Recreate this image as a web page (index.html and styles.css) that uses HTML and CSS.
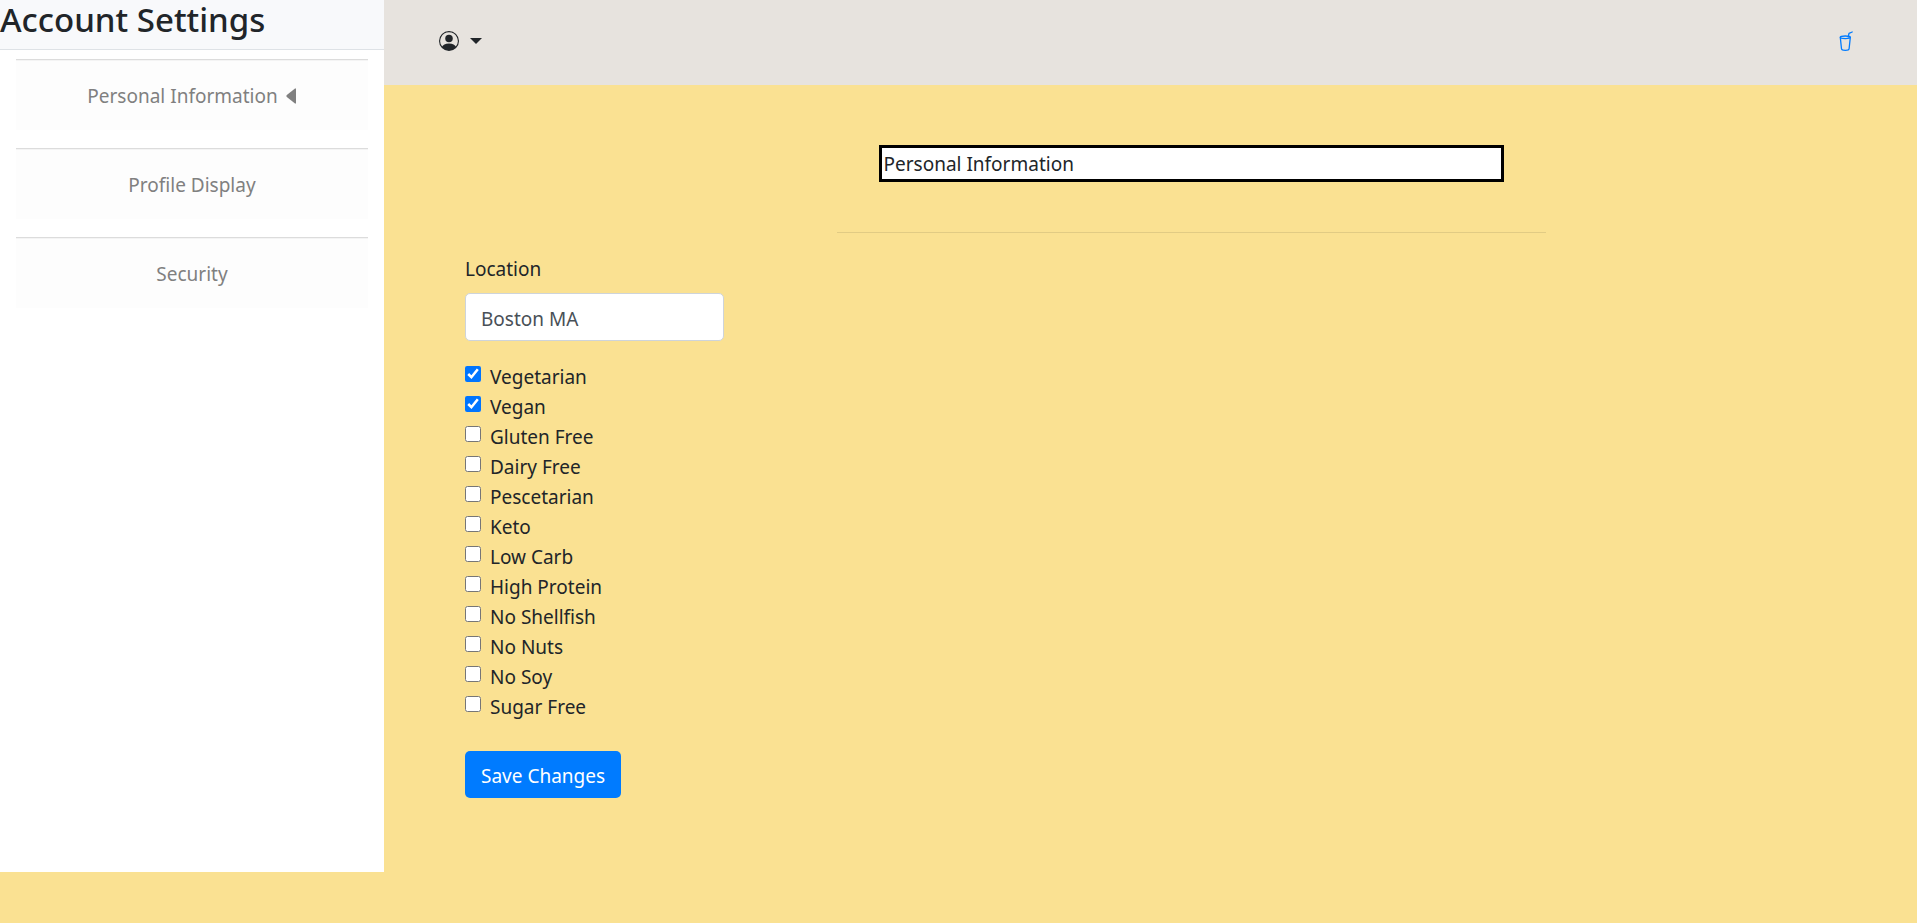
FILE: index.html
```html
<!DOCTYPE html>
<html lang="en">
<head>
<meta charset="utf-8">
<title>Account Settings</title>
<link rel="stylesheet" href="styles.css">
</head>
<body>
<div class="layout">
  <aside class="sidebar">
    <h1 class="sidebar-title">Account Settings</h1>
    <nav class="sidebar-nav">
      <a class="nav-item" href="#personal">Personal Information
        <svg class="nav-caret" viewBox="0 0 11 16" aria-hidden="true"><path d="M10 0.500v15H9L0.500 8.800V7.200L9 0.500z" fill="currentColor"/></svg></a>
      <a class="nav-item" href="#profile">Profile Display</a>
      <a class="nav-item" href="#security">Security</a>
    </nav>
  </aside>
  <div class="page">
    <header class="topbar">
      <button class="account-menu" type="button" aria-label="Account menu">
        <svg class="icon" viewBox="0 0 16 16" fill="currentColor" aria-hidden="true"><path d="M11 6a3 3 0 1 1-6 0 3 3 0 0 1 6 0z"/><path fill-rule="evenodd" d="M0 8a8 8 0 1 1 16 0A8 8 0 0 1 0 8zm8-7a7 7 0 0 0-5.468 11.370C3.242 11.226 4.805 10 8 10s4.757 1.225 5.468 2.370A7 7 0 0 0 8 1z"/></svg>
        <span class="menu-caret"></span>
      </button>
      <a class="cup-link" href="#drinks" aria-label="Drinks">
        <svg class="icon" viewBox="0 0 20 20" fill="none" stroke="currentColor" stroke-width="1.300" stroke-linecap="round" stroke-linejoin="round" aria-hidden="true"><ellipse cx="10.300" cy="6.300" rx="5" ry="1.300"/><path d="M5.300 6.500l1.200 11.200c.1.900 1.600 1.600 3.800 1.600s3.700-.7 3.800-1.600l1.200-11.200M13.200 6l.8-3.700 3.200-1.300"/></svg>
      </a>
    </header>
    <main class="content">
      <h2 class="section-title">Personal Information</h2>
      <hr class="divider">
      <form class="settings-form">
        <label class="field-label" for="location">Location</label>
        <input class="text-input" id="location" type="text" value="Boston MA">
        <div class="diet-list">
          <label class="check"><input type="checkbox" checked><span>Vegetarian</span></label>
          <label class="check"><input type="checkbox" checked><span>Vegan</span></label>
          <label class="check"><input type="checkbox"><span>Gluten Free</span></label>
          <label class="check"><input type="checkbox"><span>Dairy Free</span></label>
          <label class="check"><input type="checkbox"><span>Pescetarian</span></label>
          <label class="check"><input type="checkbox"><span>Keto</span></label>
          <label class="check"><input type="checkbox"><span>Low Carb</span></label>
          <label class="check"><input type="checkbox"><span>High Protein</span></label>
          <label class="check"><input type="checkbox"><span>No Shellfish</span></label>
          <label class="check"><input type="checkbox"><span>No Nuts</span></label>
          <label class="check"><input type="checkbox"><span>No Soy</span></label>
          <label class="check"><input type="checkbox"><span>Sugar Free</span></label>
        </div>
        <button class="save-button" type="submit">Save Changes</button>
      </form>
    </main>
  </div>
</div>
</body>
</html>
```
FILE: styles.css
```css
* { box-sizing: border-box; }

body {
  margin: 0;
  background: #fae192;
  color: #212529;
  font: 400 19px/30px "Segoe UI", "Noto Sans", sans-serif;
}

.layout {
  display: grid;
  grid-template-columns: 384px 1fr;
  align-items: start;
}

.sidebar {
  min-height: calc(100vh - 51px);
  background: #fff;
}

.sidebar-title {
  margin: 0;
  padding-bottom: 9px;
  border-bottom: 1px solid #dee2e6;
  background: #f8f9fb;
  font-size: 33px;
  line-height: 40px;
  font-weight: 500;
}

.sidebar-nav {
  display: grid;
  gap: 18px;
  padding: 9px 16px;
}

.nav-item {
  display: flex;
  align-items: center;
  justify-content: center;
  gap: 8px;
  height: 71px;
  padding-top: 2px;
  border-top: 1px solid #dcdcdc;
  box-shadow: inset 0 1px #f4f4f4;
  background: #fdfdfd;
  color: #808080;
  text-decoration: none;
}

.nav-caret {
  width: 11px;
  height: 16px;
}

.topbar {
  display: flex;
  align-items: center;
  justify-content: space-between;
  height: 85px;
  padding: 0 62px 4px 55px;
  background: #e7e3de;
}

.account-menu {
  display: flex;
  align-items: center;
  gap: 11px;
  padding: 0;
  border: 0;
  background: none;
  color: #212529;
}

.icon {
  display: block;
  width: 20px;
  height: 20px;
}

.menu-caret {
  border: 6px solid transparent;
  border-top-color: currentColor;
  border-bottom: 0;
}

.cup-link { color: #007bff; }

.content { padding: 60px 0 60px 81px; }

.section-title {
  width: 625px;
  max-width: 100%;
  margin: 0 auto;
  padding: 1px 2px 0;
  border: 3px solid #000;
  background: #fff;
  font-size: 19px;
  line-height: 30px;
  font-weight: 400;
}

.divider {
  width: 709px;
  max-width: 100%;
  margin: 50px auto 21px;
  border: 0;
  border-top: 1px solid #e1cb84;
}

.settings-form {
  display: flex;
  flex-direction: column;
  align-items: flex-start;
}

.field-label { margin: 0 0 9px; }

.text-input {
  width: 259px;
  height: 48px;
  padding: 4px 15px 0;
  border: 1px solid #ced4da;
  border-radius: 5px;
  background: #fff;
  color: #495057;
  font: inherit;
}

.diet-list {
  display: grid;
  margin: 21px 0 29px;
}

.check {
  display: flex;
  align-items: flex-start;
  gap: 9px;
  height: 30px;
}

.check input {
  width: 16px;
  height: 16px;
  margin: 4px 0 0;
  accent-color: #0075ff;
}

.save-button {
  height: 47px;
  padding: 2px 16px 0;
  border: 0;
  border-radius: 5px;
  background: #007bff;
  color: #fff;
  font: inherit;
}
```
